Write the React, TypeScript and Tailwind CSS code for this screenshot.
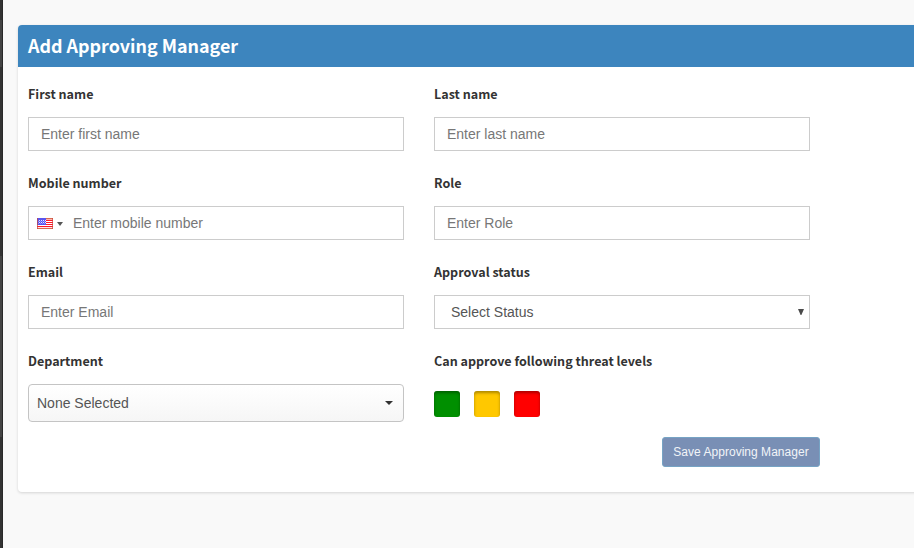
import type { ReactNode } from "react";

function Field({ label, children }: { label: string; children: ReactNode }) {
  return (
    <div className="flex h-[89px] w-[376px] flex-col">
      <label className="mb-[13px] h-5 whitespace-nowrap font-['Noto_Sans_CJK_SC',sans-serif] text-[12.55px] leading-5 font-bold text-[#333]">
        {label}
      </label>
      {children}
    </div>
  );
}

function TextInput({ placeholder }: { placeholder: string }) {
  return (
    <input
      placeholder={placeholder}
      className="h-[34px] w-full shrink-0 border border-[#ccc] bg-white px-3 text-sm text-[#555] outline-none placeholder:text-[#777]"
    />
  );
}

function Flag() {
  return (
    <svg width="16" height="11" viewBox="0 0 16 11" shapeRendering="crispEdges">
      <rect width="16" height="11" fill="#fff" />
      {[0, 2, 4, 6, 8, 10].map((y) => (
        <rect key={y} y={y} width="16" height="1" fill={y === 0 || y === 10 ? "#d66a50" : "#ff1628"} />
      ))}
      <rect y="1" x="9" width="7" height="1" fill="#ffb5b0" />
      <rect y="9" width="16" height="1" fill="#ffe5e5" />
      <rect width="9" height="7" fill="#5a55ee" />
      {[2, 3, 4, 5].map((y) =>
        [1, 3, 5, 7].map((x) => (
          <rect key={`${x}-${y}`} x={y % 2 ? x : x + 1} y={y} width="1" height="1" fill={y % 2 ? "#8f8fff" : "#e4e4ff"} />
        )),
      )}
      <path d="M0 0h1v11H0zM15 0h1v11h-1z" fill="#c7443c" fillOpacity=".7" />
    </svg>
  );
}

export default function App() {
  return (
    <div className="flex h-[548px] w-[914px] overflow-hidden bg-[#f9f9f9] font-['Liberation_Sans',Arial,sans-serif]">
      <aside className="flex w-[3px] shrink-0 flex-col border-r border-[#292929] bg-[#333]">
        <div className="h-5" />
        <div className="h-[47px] bg-[#444]" />
        <div className="h-[189px]" />
        <div className="h-[181px] bg-[#444]" />
      </aside>
      <main className="min-w-0 flex-1 pt-[25px] pl-[15px]">
        <section className="h-[467px] w-[920px] rounded bg-white shadow-[0_1px_3px_rgba(0,0,0,0.15)]">
          <header className="h-[42px] rounded-t bg-[#3d85be] px-[10px]">
            <h1 className="font-['Noto_Sans_CJK_SC',sans-serif] text-[17.9px] leading-[40px] font-bold text-white">
              Add Approving Manager
            </h1>
          </header>
          <div className="grid grid-cols-[376px_376px] gap-x-[30px] px-[10px] pt-[17px]">
            <Field label="First name">
              <TextInput placeholder="Enter first name" />
            </Field>
            <Field label="Last name">
              <TextInput placeholder="Enter last name" />
            </Field>
            <Field label="Mobile number">
              <div className="flex h-[34px] items-center border border-[#ccc] pl-2">
                <Flag />
                <svg className="mt-px ml-1" width="6" height="4" viewBox="0 0 6 4">
                  <path d="M0 0h6L3 4z" fill="#555" />
                </svg>
                <input
                  placeholder="Enter mobile number"
                  className="ml-[10px] min-w-0 flex-1 text-sm text-[#555] outline-none placeholder:text-[#777]"
                />
              </div>
            </Field>
            <Field label="Role">
              <TextInput placeholder="Enter Role" />
            </Field>
            <Field label="Email">
              <TextInput placeholder="Enter Email" />
            </Field>
            <Field label="Approval status">
              <button className="flex h-[34px] items-center justify-between border border-[#ccc] bg-white pr-[5px] pl-4 text-sm text-[#555]">
                Select Status
                <svg width="6" height="6" viewBox="0 0 6 6">
                  <path d="M0 0h6L3.4 6h-.8z" fill="#4a4a4a" />
                </svg>
              </button>
            </Field>
            <Field label="Department">
              <button className="flex h-[38px] shrink-0 items-center justify-between rounded-[4px] border border-[#c4c4c4] bg-linear-to-b from-white to-[#f6f6f6] pr-[10px] pl-2 text-sm text-[#555]">
                None Selected
                <svg width="8" height="4" viewBox="0 0 8 4">
                  <path d="M0 0h8L4 4z" fill="#333" />
                </svg>
              </button>
            </Field>
            <Field label="Can approve following threat levels">
              <div className="flex gap-[14px] pt-[7px]">
                <div className="size-[26px] rounded-[3px] bg-[#008f00] shadow-[inset_0_2px_3px_rgba(0,0,0,0.32)]" />
                <div className="size-[26px] rounded-[3px] bg-[#ffc800] shadow-[inset_0_2px_3px_rgba(0,0,0,0.32)]" />
                <div className="size-[26px] rounded-[3px] bg-[#ff0000] shadow-[inset_0_2px_3px_rgba(0,0,0,0.32)]" />
              </div>
            </Field>
          </div>
          <div className="-mt-[3px] flex w-[802px] justify-end">
            <button className="h-[30px] w-[158px] rounded-[3px] border border-[#76a3c4] bg-[#798fb5] text-xs tracking-[0.03px] whitespace-nowrap text-[#f1f4f8]">
              Save Approving Manager
            </button>
          </div>
        </section>
      </main>
    </div>
  );
}
